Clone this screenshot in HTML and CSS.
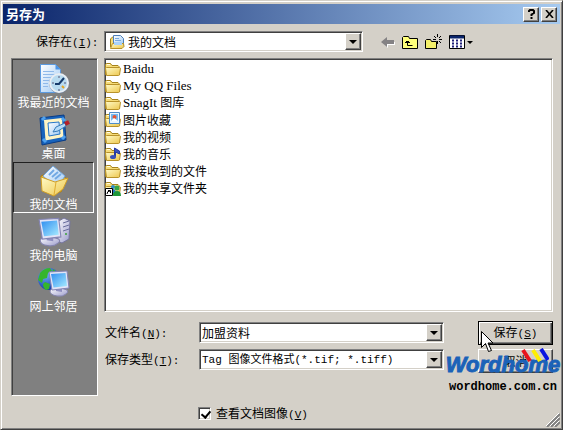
FILE: index.html
```html
<!DOCTYPE html>
<html lang="zh-CN">
<head>
  <meta charset="UTF-8">
  <meta name="viewport" content="width=device-width, initial-scale=1.0">
  <title>另存为</title>
  <link rel="stylesheet" href="styles.css">
</head>
<body>
  <!-- shared shapes -->
  <svg class="defs" width="0" height="0" aria-hidden="true">
    <defs>
      <linearGradient id="gold" x1="0" y1="0" x2="1" y2="1">
        <stop offset="0" stop-color="#fffbc8"/><stop offset="1" stop-color="#edc64c"/>
      </linearGradient>
      <linearGradient id="screen" x1="0" y1="0" x2="1" y2="1">
        <stop offset="0" stop-color="#2f8ef0"/><stop offset="1" stop-color="#a9ecff"/>
      </linearGradient>
      <linearGradient id="paper" x1="0" y1="0" x2="1" y2="1">
        <stop offset="0" stop-color="#ffffff"/><stop offset="1" stop-color="#9cc8f4"/>
      </linearGradient>
      <linearGradient id="metal" x1="0" y1="0" x2="1" y2="1">
        <stop offset="0" stop-color="#ffffff"/><stop offset="1" stop-color="#9a9acb"/>
      </linearGradient>
      <radialGradient id="earth" cx="0.35" cy="0.3" r="0.8">
        <stop offset="0" stop-color="#6fb4ff"/><stop offset="1" stop-color="#0a2ca0"/>
      </radialGradient>
      <symbol id="folder" viewBox="0 0 16 16">
        <path d="M.5 13.500V3.500l1-1h4l1.500 2h6l1 1v8z" fill="#f6dc78" stroke="#a5821c"/>
        <path d="M1.500 14.500L.5 7l1-.5h13l1 .7-1 6.800-1 .5z" fill="url(#gold)" stroke="#b8922a"/>
        <path d="M1.500 4.200l.5-.7h3" stroke="#fffbe0" fill="none"/>
      </symbol>
      <symbol id="monitor" viewBox="0 0 22 27">
        <path d="M2 21q1-3 7-3t10 2q2 2-1 4-3 3-9 2-7-1-7-5z" fill="url(#metal)" stroke="#8484ad"/>
        <path d="M8 17l6 1v4l-6-1z" fill="#8e8ec0"/>
        <path d="M1 2l18-1 2 17-17 2z" fill="#e2e4f7" stroke="#8484b4"/>
        <path d="M3 4l14.500-1 1.500 13-13.500 1.500z" fill="url(#screen)"/>
      </symbol>
    </defs>
  </svg>

  <form class="dialog">
    <header class="titlebar">
      <h1>另存为</h1>
      <button type="button" class="caption" aria-label="帮助">
        <svg width="9" height="10" viewBox="0 0 9 10"><path d="M2 3V2l1-1h3l1 1v2L4.500 5.500V7M4.500 8v2" fill="none" stroke="#000" stroke-width="2"/></svg>
      </button>
      <button type="button" class="caption" aria-label="关闭">
        <svg width="9" height="8" viewBox="0 0 9 8"><path d="M1 0l7 8M8 0L1 8" stroke="#000" stroke-width="1.600"/></svg>
      </button>
    </header>

    <div class="lookin">
      <label for="folder-select">保存在<span class="en">(<u>I</u>):</span></label>
      <div class="combo combo-icon">
        <svg class="combo-pic" width="16" height="16" viewBox="0 0 16 16">
          <path d="M1.500 13V5l2-2h3v11z" fill="#f6dc78" stroke="#a5821c"/>
          <path d="M4.500 1.500h7l3 3v8h-10z" fill="url(#paper)" stroke="#4f7fba"/>
          <path d="M6 4.500h4M6 6.500h6" stroke="#78a9df"/>
          <path d="M1.500 14.500l2-5h11l.500 3-2 2z" fill="url(#gold)" stroke="#b8922a"/>
          <path d="M5 8h8v3H5z" fill="#a9d2fa"/>
        </svg>
        <select id="folder-select"><option>我的文档</option></select>
        <span class="arrow"></span>
      </div>
      <div class="tools">
        <button type="button" aria-label="后退" disabled>
          <svg width="14" height="12" viewBox="0 0 14 12"><path d="M2 7l5 5V9h7V6" fill="#fff"/><path d="M0 6l6-5v3h7v4H6v3z" fill="#848284"/></svg>
        </button>
        <button type="button" aria-label="向上一级">
          <svg width="16" height="14" viewBox="0 0 16 14"><path d="M.5 13.500v-11l1-1h5l1 2h8v10z" fill="#ffff7b" stroke="#000"/><path d="M5.500 6v4.500h5M3 7.500h5M4 6.500h3" fill="none" stroke="#000"/></svg>
        </button>
        <button type="button" aria-label="新建文件夹">
          <svg width="17" height="16" viewBox="0 0 17 16"><path d="M.5 14.500v-8l1-1h4l1 2h5v7z" fill="#f4f06a" stroke="#000"/><path d="M12.500 0v3M12.500 7v3M8 5.500h3M14 5.500h3M9 2l2 2M16 2l-2 2M14 7l2 2" stroke="#000" stroke-width="1"/></svg>
        </button>
        <button type="button" aria-label="视图">
          <svg width="24" height="14" viewBox="0 0 24 14"><path d="M.5.5h15v13H.5z" fill="#fff" stroke="#000"/><path d="M1 2h14" stroke="#0a246a" stroke-width="3"/><path d="M3 5.500h2m2 0h2m2 0h2M3 8.500h2m2 0h2m2 0h2M3 11.500h2m2 0h2m2 0h2" stroke="#22227a" stroke-width="2"/><path d="M18 6h6l-3 3z" fill="#000"/></svg>
        </button>
      </div>
    </div>

    <div class="main">
      <nav class="places">
        <a href="#recent">
          <svg width="32" height="32" viewBox="0 0 32 32">
            <path d="M2.500 1.500h15l5 5v23h-20z" fill="url(#paper)" stroke="#5b9ae0"/>
            <path d="M17.500 1.500v5h5z" fill="#4c96e8"/>
            <path d="M5 8.500h11M5 11.500h13M5 14.500h10M5 17.500h6M5 20.500h5M5 23.500h5" stroke="#8fb9ea"/>
            <circle cx="21" cy="20.500" r="10" fill="#6f7f98"/>
            <circle cx="21" cy="20" r="9" fill="#b8dbf0" stroke="#e9eef4" stroke-width="2"/>
            <path d="M26 15l-5 6h-4" fill="none" stroke="#163b6b" stroke-width="2"/>
            <path d="M21 13v2M21 26v2M14 20h2M26 20h2" stroke="#557"/>
            <path d="M26 25l-2-2" stroke="#e9a520" stroke-width="2"/>
          </svg>
          <span>我最近的文档</span>
        </a>
        <a href="#desktop">
          <svg width="32" height="32" viewBox="0 0 32 32">
            <path d="M2 4l24-3 2 25-24 5z" fill="#1763bd" stroke="#093c86"/>
            <path d="M6 6l18-2 1.500 19-18 3.500z" fill="#fff4c4"/>
            <path d="M4 6l3-3M24 4l3 3M24 25l3-3M5 25l3 3" stroke="#4fa2f0" stroke-width="3"/>
            <path d="M10 9l11-1 1 12-11 2z" fill="url(#paper)" stroke="#2676c8"/>
            <path d="M15 18l3-5 9-4 1 3-8 5z" fill="#b5dbf8" stroke="#377bb9"/>
            <path d="M27 10l4-2" stroke="#b51f28" stroke-width="4"/>
          </svg>
          <span>桌面</span>
        </a>
        <a href="#documents" class="active">
          <svg width="32" height="32" viewBox="0 0 32 32">
            <path d="M3 11l7-3 18 5-5 14-18-3z" fill="#e9b93c" stroke="#ad7d12"/>
            <path d="M5 11L15 1l12 10-8 12z" fill="url(#paper)" stroke="#71a7df"/>
            <path d="M11 10l5-5M14 12l6-5M17 14l6-5" stroke="#72a9e4" stroke-width="2"/>
            <path d="M3 12l14 5 13-4-5 11-9 7-12-5z" fill="url(#gold)" stroke="#d19f25"/>
            <path d="M18 17l-2 13" stroke="#dfac31"/>
          </svg>
          <span>我的文档</span>
        </a>
        <a href="#computer">
          <svg width="34" height="32" viewBox="0 0 34 32">
            <path d="M20 6l7-4 6 3-1 18-7 4-5-2z" fill="url(#metal)" stroke="#74749d"/>
            <path d="M26 7l6-2M26 11l6-2M26 15l6-2" stroke="#686d9c"/>
            <circle cx="29" cy="18" r="1" fill="#3aa33a"/>
            <use href="#monitor" x="1" y="1" width="24" height="30"/>
          </svg>
          <span>我的电脑</span>
        </a>
        <a href="#network">
          <svg width="34" height="32" viewBox="0 0 34 32">
            <circle cx="12" cy="12" r="11" fill="url(#earth)"/>
            <path d="M3 6q4-5 10-5l2 3-4 2-1 5-4 1-1 4-4-3zM8 15l5 2-1 5-3 1q-3-2-3-6zM16 2l5 4-3 3-3-3z" fill="#35b52d"/>
            <use href="#monitor" x="11" y="2" width="22" height="29"/>
          </svg>
          <span>网上邻居</span>
        </a>
      </nav>

      <div class="content">
        <ul class="files">
          <li><svg width="16" height="16"><use href="#folder"/></svg><span class="en">Baidu</span></li>
          <li><svg width="16" height="16"><use href="#folder"/></svg><span class="en">My QQ Files</span></li>
          <li><svg width="16" height="16"><use href="#folder"/></svg><span><span class="en">SnagIt </span>图库</span></li>
          <li>
            <svg width="16" height="16" viewBox="0 0 16 16"><use href="#folder" width="16" height="16"/><path d="M4.500.5h10v11h-10z" fill="#e9f6ff" stroke="#4f8cc9"/><path d="M6 2h7v7H6z" fill="#72b9f2"/><circle cx="9.500" cy="5" r="2" fill="#e45433"/><path d="M6 9l3-3 4 3z" fill="#fff"/></svg>图片收藏
          </li>
          <li><svg width="16" height="16"><use href="#folder"/></svg>我的视频</li>
          <li>
            <svg width="16" height="16" viewBox="0 0 16 16"><use href="#folder" width="16" height="16"/><path d="M9.500 11V2l5 3v3l-4-2v5" fill="#3850b9" stroke="#2639a0"/><ellipse cx="8" cy="11" rx="3" ry="2" fill="#3850b9"/></svg>我的音乐
          </li>
          <li><svg width="16" height="16"><use href="#folder"/></svg>我接收到的文件</li>
          <li>
            <svg width="16" height="16" viewBox="0 0 16 16"><use href="#folder" width="16" height="16"/><circle cx="8" cy="7" r="2" fill="#2f8dc8"/><path d="M5 14q0-5 3-5t3 5z" fill="#2577c4"/><circle cx="12" cy="8" r="2.500" fill="#37a647"/><path d="M8 16q0-5 4-5t4 5z" fill="#1f973a"/><path d="M.5 8.500h7v7h-7z" fill="#fff" stroke="#000"/><path d="M2 14q0-3 3-3M3 10.500h2.500V13" fill="none" stroke="#000"/></svg>我的共享文件夹
          </li>
        </ul>

        <div class="bottom">
          <div class="fields">
            <label for="filename">文件名<span class="en">(<u>N</u>):</span></label>
            <div class="combo">
              <input type="text" id="filename" value="加盟资料">
              <span class="arrow"></span>
            </div>
            <label for="filetype">保存类型<span class="en">(<u>T</u>):</span></label>
            <div class="combo">
              <select id="filetype" class="mixed"><option>Tag 图像文件格式(*.tif; *.tiff)</option></select>
              <span class="arrow"></span>
            </div>
          </div>
          <div class="actions">
            <button type="submit" class="btn default">保存<span class="en">(<u>S</u>)</span></button>
            <button type="button" class="btn">取消</button>
            <div class="brand">
              <b>Wordhome</b>
              <small>wordhome.com.cn</small>
              <svg class="stripes" width="28" height="14" viewBox="0 0 28 14">
                <g stroke-width="4"><path d="M2 2l7 11" stroke="#e8141c"/><path d="M12 2l7 11" stroke="#ffee00"/><path d="M20 1l7 11" stroke="#0a14e0"/></g>
              </svg>
            </div>
            <svg class="pointer" width="13" height="22" viewBox="0 0 13 22"><path d="M.5.5v16l4-4 3 8 3-1-3.500-7.500h5z" fill="#fff" stroke="#000"/></svg>
          </div>
        </div>
      </div>
    </div>

    <footer class="options">
      <input type="checkbox" id="preview" checked>
      <label for="preview">查看文档图像<span class="en">(<u>V</u>)</span></label>
      <svg class="grip" width="14" height="14" viewBox="0 0 14 14"><path d="M1 14L14 1M5 14l9-9M9 14l5-5" stroke="#808080" stroke-width="2"/><path d="M0 13L13 0M4 13l9-9M8 13l5-5" stroke="#fff"/></svg>
    </footer>
  </form>
</body>
</html>
```
FILE: styles.css
```css
* {
  box-sizing: border-box;
}
body {
  margin: 0;
  background: #d4d0c8;
  font-family: "Noto Sans CJK SC", sans-serif;
  font-size: 12px;
  line-height: 16px;
  color: #000;
}
.defs {
  position: absolute;
}
button, input, select {
  font: inherit;
  color: inherit;
}
svg {
  display: block;
  flex: none;
}
.en {
  font-family: "Liberation Mono", monospace;
  font-size: 11px;
  white-space: pre;
}
.dialog {
  min-height: 100vh;
  display: flex;
  flex-direction: column;
  padding: 2px;
  border: 1px solid;
  border-color: #d4d0c8 #404040 #404040 #d4d0c8;
  box-shadow: inset 1px 1px #fff, inset -1px -1px #808080;
}

/* title bar */
.titlebar {
  display: flex;
  align-items: center;
  gap: 2px;
  height: 20px;
  margin-top: 1px;
  padding: 0 3px;
  background: linear-gradient(to right, #0a246a, #a6caf0);
}
.titlebar h1 {
  flex: 1;
  margin: 0;
  font-size: 13px;
  line-height: 16px;
  color: #fff;
}
.caption {
  display: flex;
  align-items: center;
  justify-content: center;
  width: 16px;
  height: 15px;
  padding: 0;
  background: #d4d0c8;
  border: 1px solid;
  border-color: #fff #404040 #404040 #fff;
  box-shadow: inset -1px -1px #808080;
}

/* look-in row */
.lookin {
  display: flex;
  align-items: center;
  padding: 7px 8px 6px;
}
.lookin label {
  width: 93px;
  padding-left: 25px;
}
.lookin .combo {
  flex: 0 1 259px;
}
.tools {
  display: flex;
  align-items: center;
  gap: 7px;
  margin-left: 18px;
}
.tools button {
  padding: 0;
  border: 0;
  background: none;
}

/* sunken fields */
.combo {
  position: relative;
  display: flex;
  height: 21px;
  background: #fff;
  border: 1px solid;
  border-color: #808080 #fff #fff #808080;
  box-shadow: inset 1px 1px #404040, inset -1px -1px #d4d0c8;
}
.combo select, .combo input {
  appearance: none;
  flex: 1;
  min-width: 0;
  padding: 0 18px 0 2px;
  border: 0;
  outline: 0;
  background: none;
  border-radius: 0;
}
.combo .mixed {
  font-family: "Liberation Mono", "Noto Sans CJK SC", monospace;
  font-size: 11px;
}
.combo-icon select {
  padding-left: 23px;
}
.combo-pic {
  position: absolute;
  left: 4px;
  top: 2px;
}
.arrow {
  position: absolute;
  top: 1px;
  right: 1px;
  bottom: 1px;
  width: 16px;
  display: flex;
  align-items: center;
  justify-content: center;
  background: #d4d0c8;
  border: 1px solid;
  border-color: #fff #404040 #404040 #fff;
  box-shadow: inset -1px -1px #808080;
  pointer-events: none;
}
.arrow::before {
  content: "";
  border: 4px solid transparent;
  border-top-color: #000;
  border-bottom: 0;
}

/* places bar and content */
.main {
  flex: 1;
  display: flex;
  gap: 6px;
  padding: 0 7px 0 8px;
}
.places {
  flex: none;
  width: 87px;
  padding: 1px 3px 1px 1px;
  background: #808080;
  border: 1px solid;
  border-color: #808080 #fff #fff #808080;
  box-shadow: inset 1px 1px #404040;
}
.places a {
  display: flex;
  flex-direction: column;
  align-items: center;
  height: 51px;
  padding-top: 2px;
  border: 1px solid transparent;
  color: #fff;
  line-height: 14px;
  text-decoration: none;
}
.places .active {
  border-color: #202020 #fff #fff #202020;
}
.content {
  flex: 1;
  min-width: 0;
  display: flex;
  flex-direction: column;
}
.files {
  flex: 1;
  margin: 0;
  padding: 1px 0;
  list-style: none;
  background: #fff;
  border: 1px solid;
  border-color: #808080 #fff #fff #808080;
  box-shadow: inset 1px 1px #404040, inset -1px -1px #d4d0c8;
}
.files li {
  display: flex;
  align-items: center;
  gap: 2px;
  height: 17px;
}
.files .en {
  font-family: "Liberation Serif", serif;
  font-size: 13px;
}

/* name, type and buttons */
.bottom {
  display: flex;
  gap: 34px;
  padding: 9px 0 23px 1px;
}
.fields {
  flex: 1;
  min-width: 0;
  display: grid;
  grid-template-columns: 94px 1fr;
  gap: 6px 0;
  align-content: start;
  align-items: center;
  padding-top: 1px;
}
.actions {
  position: relative;
  flex: none;
  width: 75px;
  display: flex;
  flex-direction: column;
  gap: 4px;
}
.btn {
  height: 24px;
  padding: 0;
  background: #d4d0c8;
  border: 1px solid;
  border-color: #fff #404040 #404040 #fff;
  box-shadow: inset -1px -1px #808080;
}
.default {
  border-color: #000;
  box-shadow: inset 1px 1px #fff, inset -1px -1px #404040, inset -2px -2px #808080;
}
.pointer {
  position: absolute;
  left: 3px;
  top: 10px;
}

/* logo stamped over the buttons */
.brand {
  position: absolute;
  right: -8px;
  top: 29px;
  width: 116px;
  display: flex;
  flex-direction: column;
  align-items: center;
  pointer-events: none;
}
.brand b {
  font: italic bold 22px/30px "Liberation Sans", sans-serif;
  color: #1b62b8;
  -webkit-text-stroke: 1px #1b62b8;
}
.brand small {
  font: bold 12px/14px "Liberation Mono", monospace;
}
.stripes {
  position: absolute;
  right: 12px;
  top: -2px;
}

/* bottom line */
.options {
  display: flex;
  align-items: center;
  gap: 5px;
  height: 31px;
  padding-left: 195px;
}
.options input {
  appearance: none;
  width: 13px;
  height: 13px;
  margin: 4px 0 0;
  background: #fff;
  border: 1px solid;
  border-color: #808080 #fff #fff #808080;
  box-shadow: inset 1px 1px #404040, inset -1px -1px #d4d0c8;
}
.options input:checked::before {
  content: "";
  display: block;
  width: 4px;
  height: 7px;
  margin: 1px 0 0 4px;
  border: solid #000;
  border-width: 0 2px 2px 0;
  transform: rotate(40deg);
}
.options label {
  padding-top: 4px;
}
.grip {
  align-self: flex-end;
  margin-left: auto;
}
```
